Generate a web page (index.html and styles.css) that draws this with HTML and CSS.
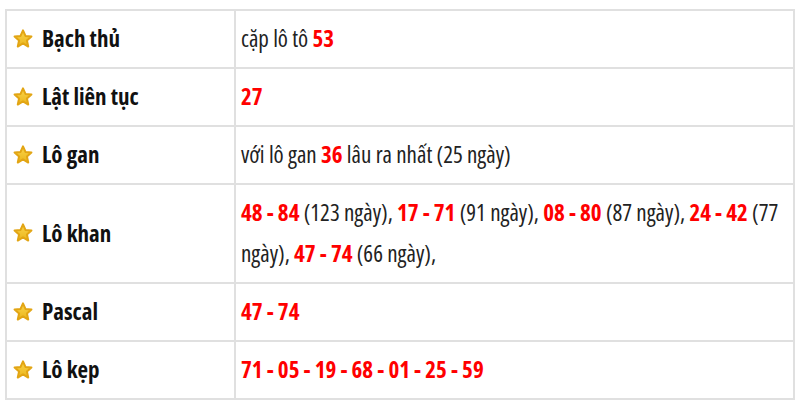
FILE: index.html
```html
<!DOCTYPE html>
<html lang="vi">
<head>
<meta charset="utf-8">
<title>Thống kê lô</title>
<link rel="stylesheet" href="styles.css">
</head>
<body>
<svg width="0" height="0" class="defs">
  <defs>
    <linearGradient id="gold" x1="0" y1="0" x2="0" y2="1">
      <stop offset="0" stop-color="#fbd54a"/>
      <stop offset="1" stop-color="#eab51c"/>
    </linearGradient>
    <symbol id="star" viewBox="0 0 24 24">
      <path d="M12 2.6 L14.7 8.6 L21.2 9.3 L16.3 13.7 L17.7 20.2 L12 16.9 L6.3 20.2 L7.7 13.7 L2.8 9.3 L9.3 8.6 Z" fill="url(#gold)" stroke="#e2a514" stroke-width="2.2" stroke-linejoin="round"/>
    </symbol>
  </defs>
</svg>
<table class="stats">
  <tr>
    <th><span class="label"><svg class="star"><use href="#star"/></svg>Bạch thủ</span></th>
    <td>cặp lô tô <b class="num">53</b></td>
  </tr>
  <tr>
    <th><span class="label"><svg class="star"><use href="#star"/></svg>Lật liên tục</span></th>
    <td><b class="num">27</b></td>
  </tr>
  <tr>
    <th><span class="label"><svg class="star"><use href="#star"/></svg>Lô gan</span></th>
    <td>với lô gan <b class="num">36</b> lâu ra nhất (25 ngày)</td>
  </tr>
  <tr>
    <th><span class="label"><svg class="star"><use href="#star"/></svg>Lô khan</span></th>
    <td><b class="num">48 - 84</b> (123 ngày), <b class="num">17 - 71</b> (91 ngày), <b class="num">08 - 80</b> (87 ngày), <b class="num">24 - 42</b> (77 ngày), <b class="num">47 - 74</b> (66 ngày),</td>
  </tr>
  <tr>
    <th><span class="label"><svg class="star"><use href="#star"/></svg>Pascal</span></th>
    <td><b class="num">47 - 74</b></td>
  </tr>
  <tr>
    <th><span class="label"><svg class="star"><use href="#star"/></svg>Lô kẹp</span></th>
    <td><b class="num">71 - 05 - 19 - 68 - 01 - 25 - 59</b></td>
  </tr>
  <tr>
    <th><span class="label">&nbsp;</span></th>
    <td>&nbsp;</td>
  </tr>
</table>
</body>
</html>
```

FILE: styles.css
```css
html, body {
  margin: 0;
  padding: 0;
  background: #fff;
}
body {
  padding: 9px 5px 0 5px;
  font-family: "Open Sans", "Noto Sans", sans-serif;
  font-stretch: 76%;
  font-size: 23px;
  color: #222;
}
.defs {
  position: absolute;
  width: 0;
  height: 0;
}
.stats {
  width: 790px;
  border-collapse: collapse;
  table-layout: fixed;
}
.stats th,
.stats td {
  border: 2px solid #e0e0e0;
  line-height: 41px;
  padding: 7px 4px 8px 5px;
  vertical-align: middle;
  text-align: left;
}
.stats th {
  width: 218px;
  font-weight: bold;
  color: #111;
}
.label {
  display: flex;
  align-items: center;
  gap: 8px;
}
.star {
  width: 22px;
  height: 22px;
  flex: none;
}
.num {
  color: #ff0000;
  font-weight: bold;
}
```
